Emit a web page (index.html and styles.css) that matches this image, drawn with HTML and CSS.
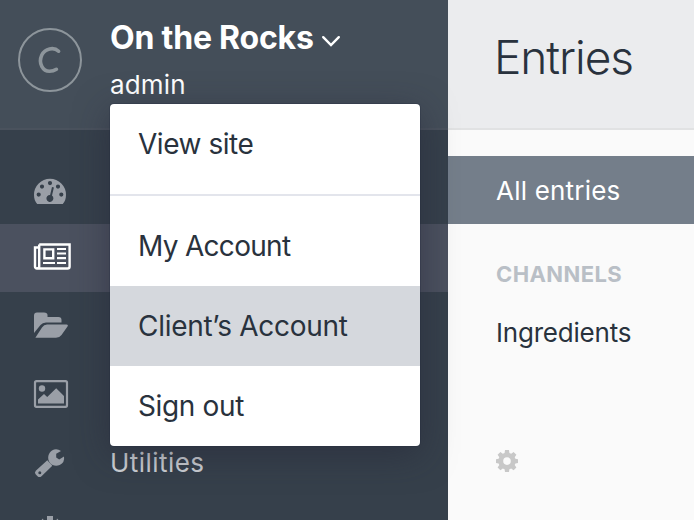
FILE: index.html
```html
<!DOCTYPE html>
<html lang="en">
<head>
<meta charset="utf-8">
<title>Entries</title>
<link rel="stylesheet" href="styles.css">
</head>
<body>
<div class="app">
  <aside class="sidebar">
    <header class="brand">
      <svg class="logo" viewBox="0 0 64 64"><circle cx="32" cy="32" r="31"/><path class="logo-c" d="M40.600 23.200C35.800 18.600 27 20.500 23.800 27C20 35.500 25 43.200 31.500 43.200C34.500 43.200 36.500 42.500 38.400 41.300"/></svg>
      <div class="site">
        <div class="site-name"><span>On the Rocks</span><svg class="chevron" viewBox="0 0 20 12"><path d="M2.200 2.200L10 10L17.800 2.200"/></svg></div>
        <div class="user">admin</div>
        <div class="menu">
          <a class="item"><span class="t-view">View site</span></a>
          <hr>
          <a class="item"><span class="t-my">My Account</span></a>
          <a class="item selected"><span class="t-client">Client’s Account</span></a>
          <a class="item"><span class="t-out">Sign out</span></a>
        </div>
      </div>
    </header>
    <nav class="nav">
      <a class="row"><svg class="icon gauge" viewBox="0 0 40 40"><path fill-rule="evenodd" d="M7.200 32C5 29.500 4 26.500 4 22.700a16 16 0 0 1 32 0C36 26.500 35 29.500 32.800 32zM8.700 20.500a2.100 2.100 0 1 0 0 4.200a2.100 2.100 0 0 0 0-4.200zM12 12.500a2.100 2.100 0 1 0 0 4.200a2.100 2.100 0 0 0 0-4.200zM20 9a2.100 2.100 0 1 0 0 4.200a2.100 2.100 0 0 0 0-4.200zM28 12.500a2.100 2.100 0 1 0 0 4.200a2.100 2.100 0 0 0 0-4.200zM31.300 20.500a2.100 2.100 0 1 0 0 4.200a2.100 2.100 0 0 0 0-4.200zM22 15L20.100 22.900a3.500 3.500 0 1 0 1.900.7L23.900 15.500z"/></svg></a>
      <a class="row active"><svg class="icon" viewBox="0 0 40 40"><path class="line" d="M9.200 6.500H39.600V28.500Q39.600 30.500 37.600 30.500H7Q5 30.500 5 28.500V9.500H9.200M9.200 6.500V28.500Q9.200 30.200 7.200 30.300M14.400 11.400H23.200V20.200H14.400z"/><path class="line thin" d="M27 11H36M27 15.500H36M27 20.200H36M13 25H25M27 25H36"/></svg></a>
      <a class="row"><svg class="icon" viewBox="0 0 40 40"><path d="M4 27V9.500Q4 6.500 7 6.500H14Q17.500 6.500 17.500 9V11H28.500Q31.500 11 31.500 14V16.500H16Q12.500 16.500 10.500 19z"/><path d="M5.500 31.500L12 21.500Q14 18.500 17 18.500H36.500Q38.500 18.500 37.500 20.500L31.500 29Q29.500 31.800 26 31.800H6.500Q5 31.800 5.500 31.500z"/></svg></a>
      <a class="row"><svg class="icon" viewBox="0 0 40 40"><path class="frame" d="M6.500 7.200H35.500Q37 7.200 37 8.700V31.300Q37 32.800 35.500 32.800H6.500Q5 32.800 5 31.300V8.700Q5 7.200 6.500 7.200z"/><circle cx="12" cy="14.500" r="3.200"/><path d="M8 29.500V25.500L14 20L17.200 23L26.200 14.200L34 22V29.500z"/></svg></a>
      <a class="row"><svg class="icon" viewBox="0 0 40 40"><path fill-rule="evenodd" d="M17.300 18.200L22.300 23.700L11.500 34.200Q9.500 36 7.500 34.200L5.800 32.500Q4 30.700 5.800 28.700zM9.800 29.200a1.500 1.500 0 1 0 0 3a1.500 1.500 0 0 0 0-3z"/><path d="M31 9L26.200 11.800V15.500L29.200 17.500L34 14.600Q35 20.500 29.700 23.100C26 24.600 22 23.600 20 21C16.500 16.500 18.500 10.500 22 8.500Q26.500 6 31 9z"/></svg><span class="utilities">Utilities</span></a>
      <a class="row"><svg class="icon cog" viewBox="0 0 32 32"><path fill-rule="evenodd" d="M13 0h6v5l3 1.200 1-3.700 5 5-3.500 2.500L27 13h5v6h-5l-1.500 3 3.500 3.500-4 4-3.500-3.500L19 27v5h-6v-5l-2.500-1L7 29.500l-4-4L6.500 22 5 19H0v-6h5l2.500-3L4 7.500l5-5 1 3.700L13 5zM16 11a5 5 0 1 0 0 10a5 5 0 0 0 0-10z"/></svg></a>
    </nav>
  </aside>
  <main class="main">
    <header class="heading"><h1><span>Entries</span></h1></header>
    <div class="sources">
      <a class="source on"><span class="t-all">All entries</span></a>
      <h2><span>CHANNELS</span></h2>
      <a class="source"><span class="t-ing">Ingredients</span></a>
      <svg class="gear" viewBox="0 0 22 22"><path fill-rule="evenodd" d="M9 0h4l.4 2.900 1.800.8 2.400-1.700 2.800 2.800-1.700 2.400.7 1.600 2.600.4v3.800l-2.600.4-.7 1.600 1.700 2.400-2.800 2.800-2.400-1.700-1.800.8L13 22H9l-.4-2.700-1.800-.8-2.400 1.700-2.800-2.800 1.700-2.400-.7-1.600L0 13V9.200l2.600-.4.7-1.600L1.600 4.800 4.400 2l2.400 1.700 1.800-.8zM11 7.300a3.800 3.800 0 1 0 0 7.600a3.800 3.800 0 0 0 0-7.600z"/></svg>
    </div>
  </main>
</div>
</body>
</html>
```
FILE: styles.css
```css
* { box-sizing: border-box; }
body { margin: 0; font-family: Inter, "Liberation Sans", sans-serif; font-size: 26px; color: #29323d; }
.app { display: flex; width: 694px; height: 520px; overflow: hidden; }
.sidebar { width: 448px; flex: none; background: #36404b; position: relative; z-index: 1; }
.brand { display: flex; height: 130px; background: #444e59; border-bottom: 2px solid #4a525d; padding-left: 18px; }
.logo { width: 64px; height: 64px; margin-top: 28px; margin-right: 28px; fill: none; stroke: #8d959b; stroke-width: 2; flex: none; }
.logo-c { stroke-width: 3.600; stroke-linecap: round; }
.site { position: relative; padding-top: 16px; color: #fff; white-space: nowrap; }
.site-name { display: flex; align-items: center; height: 42px; font-size: 32px; font-weight: 650; letter-spacing: -.2px; }
.chevron { width: 20px; height: 12px; margin-left: 7px; margin-top: 7px; fill: none; stroke: #fff; stroke-width: 2.400; stroke-linecap: round; }
.user { height: 36px; line-height: 36px; margin-top: 9px; font-size: 26px; letter-spacing: .15px; }
.menu { position: absolute; left: 0; top: 104px; width: 310px; height: 342px; overflow: hidden; border-radius: 4px; background: #fff; color: #29323d; box-shadow: 0 0 0 1px rgba(31,41,61,.25), 0 8px 34px rgba(35,36,53,.5); }
.item { display: flex; align-items: center; height: 80px; padding-left: 28px; font-size: 28px; }
.t-view { letter-spacing: -.45px; }
.t-my { letter-spacing: -.7px; }
.t-client { letter-spacing: -.28px; }
.t-out { letter-spacing: -.35px; }
.selected { background: #d5d8dd; }
.menu hr { height: 2px; margin: 10px 0; border: 0; background: #e3e5ec; }
.nav { padding-top: 26px; }
.row { display: flex; align-items: center; height: 68px; padding-left: 30px; color: #d0d3d7; }
.active { background: #4b515f; }
.icon { width: 40px; height: 40px; margin-right: 40px; fill: #9a9fa7; overflow: visible; flex: none; }
.gauge { margin-top: 4px; }
.cog { width: 32px; height: 32px; margin: 4px 44px 0 4px; }
.utilities { letter-spacing: .45px; }
.line { fill: none; stroke: #fff; stroke-width: 2.400; }
.thin { stroke-width: 2.200; }
.frame { fill: none; stroke: #9a9fa7; stroke-width: 2.200; }
.main { flex: 1; background: #fafafa; white-space: nowrap; }
.heading { display: flex; align-items: center; height: 130px; padding: 0 0 14px 46px; background: #ebecee; border-bottom: 2px solid #e1e2e3; }
h1 { margin: 0; font-size: 46px; font-weight: 360; letter-spacing: -1.050px; }
.sources { padding-top: 26px; }
.source { display: flex; align-items: center; height: 68px; padding-left: 48px; }
.t-all { letter-spacing: .2px; }
.t-ing { letter-spacing: -.2px; }
.on { background: #747e8a; color: #fff; }
h2 { margin: 36px 0 10px 48px; height: 28px; line-height: 28px; font-size: 22px; font-weight: 700; letter-spacing: .4px; color: #b9bfc6; }
.gear { display: block; width: 22px; height: 22px; margin: 84px 0 0 48px; fill: #c8c8c8; }
```
